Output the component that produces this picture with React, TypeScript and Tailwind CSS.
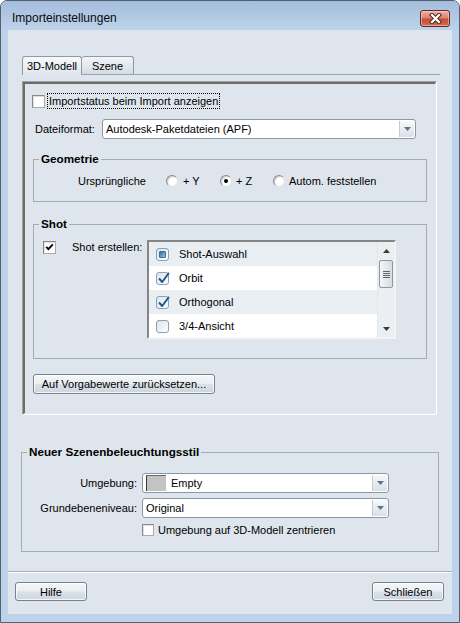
import React from "react";

function ClassicCheck({ checked = false, size = "w-[13px] h-[13px]" }: { checked?: boolean; size?: string }) {
  return (
    <div
      className={`flex shrink-0 items-center justify-center border border-t-[#8a8a8a] border-l-[#8a8a8a] border-r-[#a9a9a9] border-b-[#a9a9a9] bg-white shadow-[inset_1px_1px_0_#e0e0e0] ${size}`}
    >
      {checked && (
        <svg width="9" height="9" viewBox="0 0 9 9">
          <path d="M1.2 3.8 L3.4 6.2 L7.8 1.4" stroke="#000" strokeWidth="1.9" fill="none" />
        </svg>
      )}
    </div>
  );
}

function Radio({ checked = false }: { checked?: boolean }) {
  return (
    <div className="flex h-[12px] w-[12px] shrink-0 items-center justify-center rounded-full border border-t-[#8c8c8c] border-l-[#8c8c8c] border-r-[#e2e2e2] border-b-[#e2e2e2] bg-white shadow-[inset_1px_1px_1px_#c9c9c9]">
      {checked && <div className="h-[4px] w-[4px] rounded-full bg-black" />}
    </div>
  );
}

function Combo({ w, children }: { w: string; children: React.ReactNode }) {
  return (
    <div className={`flex h-[20px] shrink-0 items-stretch rounded-[3px] border border-[#8a97a4] bg-white ${w}`}>
      <div className="flex flex-1 items-center overflow-hidden whitespace-nowrap pl-[3px]">{children}</div>
      <div className="m-[1px] flex w-[15px] items-center justify-center rounded-r-[2px] border-l border-[#c2cad2] bg-gradient-to-b from-[#f7f9fa] to-[#d9e0e6]">
        <svg width="7" height="4" viewBox="0 0 7 4">
          <path d="M0 0 H7 L3.5 4 Z" fill="#607488" />
        </svg>
      </div>
    </div>
  );
}

function Btn({ className, children }: { className: string; children: React.ReactNode }) {
  return (
    <div
      className={`flex items-center justify-center rounded-[3px] border border-[#76828e] bg-[linear-gradient(to_bottom,#f5f7f9_0%,#eaeef2_48%,#dbe2e8_52%,#cdd5dd_100%)] shadow-[inset_0_0_0_1px_rgba(255,255,255,0.75)] ${className}`}
    >
      {children}
    </div>
  );
}

function ListIcon({ state }: { state: "ind" | "on" | "off" }) {
  return (
    <div className="relative flex h-[13px] w-[13px] shrink-0 items-center justify-center rounded-[3px] border border-[#8aa0b6] bg-gradient-to-br from-[#dce4ec] to-white">
      {state === "ind" && (
        <div className="h-[7px] w-[7px] rounded-[1px] border border-[#3b6f97] bg-gradient-to-br from-[#2e6b9a] to-[#a4c6df]" />
      )}
      {state === "on" && (
        <svg className="absolute left-[1px] top-[-1px]" width="12" height="13" viewBox="0 0 12 13">
          <path d="M1.5 7 L4.2 10 L10.5 1.5" stroke="#1e5a8c" strokeWidth="2" fill="none" strokeLinecap="round" strokeLinejoin="round" />
        </svg>
      )}
    </div>
  );
}

function Fieldset({ title, className, children }: { title: string; className: string; children: React.ReactNode }) {
  return (
    <fieldset className={`shrink-0 border border-[#a3abb3] ${className}`}>
      <legend className="ml-[5px] px-[2px] text-[11.7px] font-bold leading-[14px]">{title}</legend>
      {children}
    </fieldset>
  );
}

const items: { label: string; state: "ind" | "on" | "off"; bg: string }[] = [
  { label: "Shot-Auswahl", state: "ind", bg: "bg-[#e9eef2]" },
  { label: "Orbit", state: "on", bg: "bg-white" },
  { label: "Orthogonal", state: "on", bg: "bg-[#e9eef2]" },
  { label: "3/4-Ansicht", state: "off", bg: "bg-white" },
];

export default function App() {
  return (
    <div className="h-[623px] w-[460px] bg-white font-['Liberation_Sans',Arial,sans-serif] text-[11px] leading-[14px] text-black">
      <div className="flex h-full w-full flex-col rounded-t-[7px] border border-[#53606e] bg-[#bdd3eb]">
        {/* Title bar */}
        <div className="flex h-[29px] shrink-0 items-start rounded-t-[6px] bg-gradient-to-b from-[#a4bddb] to-[#bdd3eb] pl-[11px] pr-[9px]">
          <span className="mt-[10px] text-[12px] leading-[14px] text-[#0a0a0a]">Importeinstellungen</span>
          <div className="ml-auto mt-[9px] flex h-[17px] w-[30px] items-center justify-center rounded-[3px] border border-[#5e2a22] bg-[linear-gradient(to_bottom,#eeb3a5_0%,#d98371_45%,#c64d35_55%,#d26b50_100%)] shadow-[inset_0_0_0_1px_rgba(255,220,210,0.5)]">
            <svg width="13" height="11" viewBox="0 0 13 11">
              <path d="M3 2 L10 9 M10 2 L3 9" stroke="#4a2a24" strokeWidth="4.2" strokeLinecap="square" fill="none" />
              <path d="M3 2 L10 9 M10 2 L3 9" stroke="#ffffff" strokeWidth="2.2" strokeLinecap="square" fill="none" />
            </svg>
          </div>
        </div>

        {/* Client area */}
        <div className="mx-[7px] mb-[8px] flex flex-1 flex-col bg-[#dee5ed]">
          {/* Tabs */}
          <div className="ml-[14px] mr-[12px] mt-[26px] flex h-[19px] shrink-0 items-end border-b border-[#97a3ae]">
            <div className="relative z-10 -mb-px flex h-[19px] w-[60px] items-center justify-center rounded-t-[3px] border-l border-r border-t border-[#8e9aa6] bg-gradient-to-b from-[#f7f9fb] to-[#dee5ed]">
              3D-Modell
            </div>
            <div className="flex h-[18px] w-[52px] items-center justify-center rounded-t-[3px] border-r border-t border-[#8e9aa6] bg-gradient-to-b from-[#f3f5f8] to-[#d3dbe3]">
              Szene
            </div>
          </div>

          {/* Panel */}
          <div className="ml-[14px] mt-[6px] flex h-[334px] w-[415px] shrink-0 border border-b-white border-l-[#a0a0a0] border-r-white border-t-[#a0a0a0]">
            <div className="flex flex-1 flex-col border-b border-l-2 border-r border-t-2 border-b-[#e6e6e6] border-l-[#6c6c6c] border-r-[#e6e6e6] border-t-[#6c6c6c]">
              {/* Import status checkbox */}
              <div className="ml-[7px] mt-[9px] flex h-[16px] items-center">
                <ClassicCheck />
                <span className="ml-[2px] border border-dotted border-black px-[1px] leading-[14px]">
                  Importstatus beim Import anzeigen
                </span>
              </div>

              {/* Dateiformat */}
              <div className="ml-[10px] mt-[10px] flex h-[20px] items-center">
                <span className="w-[67px]">Dateiformat:</span>
                <Combo w="w-[314px]">Autodesk-Paketdateien (APF)</Combo>
              </div>

              {/* Geometrie */}
              <Fieldset title="Geometrie" className="ml-[8px] mt-[13px] w-[394px]">
                <div className="flex h-[14px] items-center pt-0 mt-[8px] mb-[13px]">
                  <span className="ml-[44px] w-[88px]">Ursprüngliche</span>
                  <Radio />
                  <span className="ml-[5px] w-[37px]">+ Y</span>
                  <Radio checked />
                  <span className="ml-[4px] w-[37px]">+ Z</span>
                  <Radio />
                  <span className="ml-[4px]">Autom. feststellen</span>
                </div>
              </Fieldset>

              {/* Shot */}
              <Fieldset title="Shot" className="ml-[8px] mt-[15px] w-[394px]">
                <div className="mb-[19px] mt-[9px] flex items-start">
                  <div className="ml-[9px] mt-[1px]">
                    <ClassicCheck checked />
                  </div>
                  <span className="ml-[16px] w-[75px]">Shot erstellen:</span>
                  <div className="flex h-[99px] w-[249px] border-2 border-b-[#f4f4f4] border-l-[#858585] border-r-[#f4f4f4] border-t-[#858585] bg-white">
                    <div className="flex flex-1 flex-col overflow-hidden">
                      {items.map((it) => (
                        <div key={it.label} className={`flex h-[24px] shrink-0 items-center ${it.bg}`}>
                          <div className="ml-[7px]">
                            <ListIcon state={it.state} />
                          </div>
                          <span className="ml-[10px]">{it.label}</span>
                        </div>
                      ))}
                    </div>
                    <div className="flex w-[17px] flex-col border-l border-[#e3e7ea] bg-[#eceff1]">
                      <div className="flex h-[17px] shrink-0 items-center justify-center">
                        <svg width="7" height="4" viewBox="0 0 7 4">
                          <path d="M3.5 0 L7 4 H0 Z" fill="#3a3a3a" />
                        </svg>
                      </div>
                      <div className="mx-[1px] mt-px flex h-[28px] shrink-0 flex-col items-center justify-center gap-[1px] rounded-[2px] border border-[#8f979e] bg-gradient-to-r from-[#f4f5f6] to-[#d8dde2]">
                        <div className="h-px w-[7px] bg-[#5c666f]" />
                        <div className="h-px w-[7px] bg-[#5c666f]" />
                        <div className="h-px w-[7px] bg-[#5c666f]" />
                        <div className="h-px w-[7px] bg-[#5c666f]" />
                      </div>
                      <div className="flex-1" />
                      <div className="flex h-[17px] shrink-0 items-center justify-center">
                        <svg width="7" height="4" viewBox="0 0 7 4">
                          <path d="M0 0 H7 L3.5 4 Z" fill="#3a3a3a" />
                        </svg>
                      </div>
                    </div>
                  </div>
                </div>
              </Fieldset>

              <Btn className="ml-[8px] mt-[15px] h-[20px] w-[182px] shrink-0">Auf Vorgabewerte zurücksetzen...</Btn>
            </div>
          </div>

          {/* Scene lighting style */}
          <Fieldset title="Neuer Szenenbeleuchtungsstil" className="ml-[13px] mt-[30px] w-[418px]">
            <div className="mb-[14px] mt-[14px] flex flex-col">
              <div className="flex h-[20px] items-center">
                <span className="w-[115px] pr-0 text-right">Umgebung:</span>
                <div className="ml-[5px]">
                  <Combo w="w-[247px]">
                    <div className="h-[16px] w-[20px] border-l border-t border-l-[#3a3a3a] border-t-[#6a6a6a] bg-[#c3c3c3]" />
                    <span className="ml-[5px]">Empty</span>
                  </Combo>
                </div>
              </div>
              <div className="mt-[5px] flex h-[20px] items-center">
                <span className="w-[115px] text-right">Grundebeneniveau:</span>
                <div className="ml-[5px]">
                  <Combo w="w-[247px]">Original</Combo>
                </div>
              </div>
              <div className="mt-[5px] flex h-[14px] items-center">
                <div className="ml-[120px]">
                  <ClassicCheck size="w-[12px] h-[12px]" />
                </div>
                <span className="ml-[4px]">Umgebung auf 3D-Modell zentrieren</span>
              </div>
            </div>
          </Fieldset>

          {/* Separator */}
          <div className="mt-[19px] h-[2px] shrink-0 border-b border-t border-b-white border-t-[#a5afb9]" />

          {/* Bottom buttons */}
          <div className="ml-[7px] mr-[8px] mt-[9px] flex shrink-0 justify-between">
            <Btn className="h-[19px] w-[72px]">Hilfe</Btn>
            <Btn className="h-[19px] w-[72px]">Schließen</Btn>
          </div>
        </div>
      </div>
    </div>
  );
}
